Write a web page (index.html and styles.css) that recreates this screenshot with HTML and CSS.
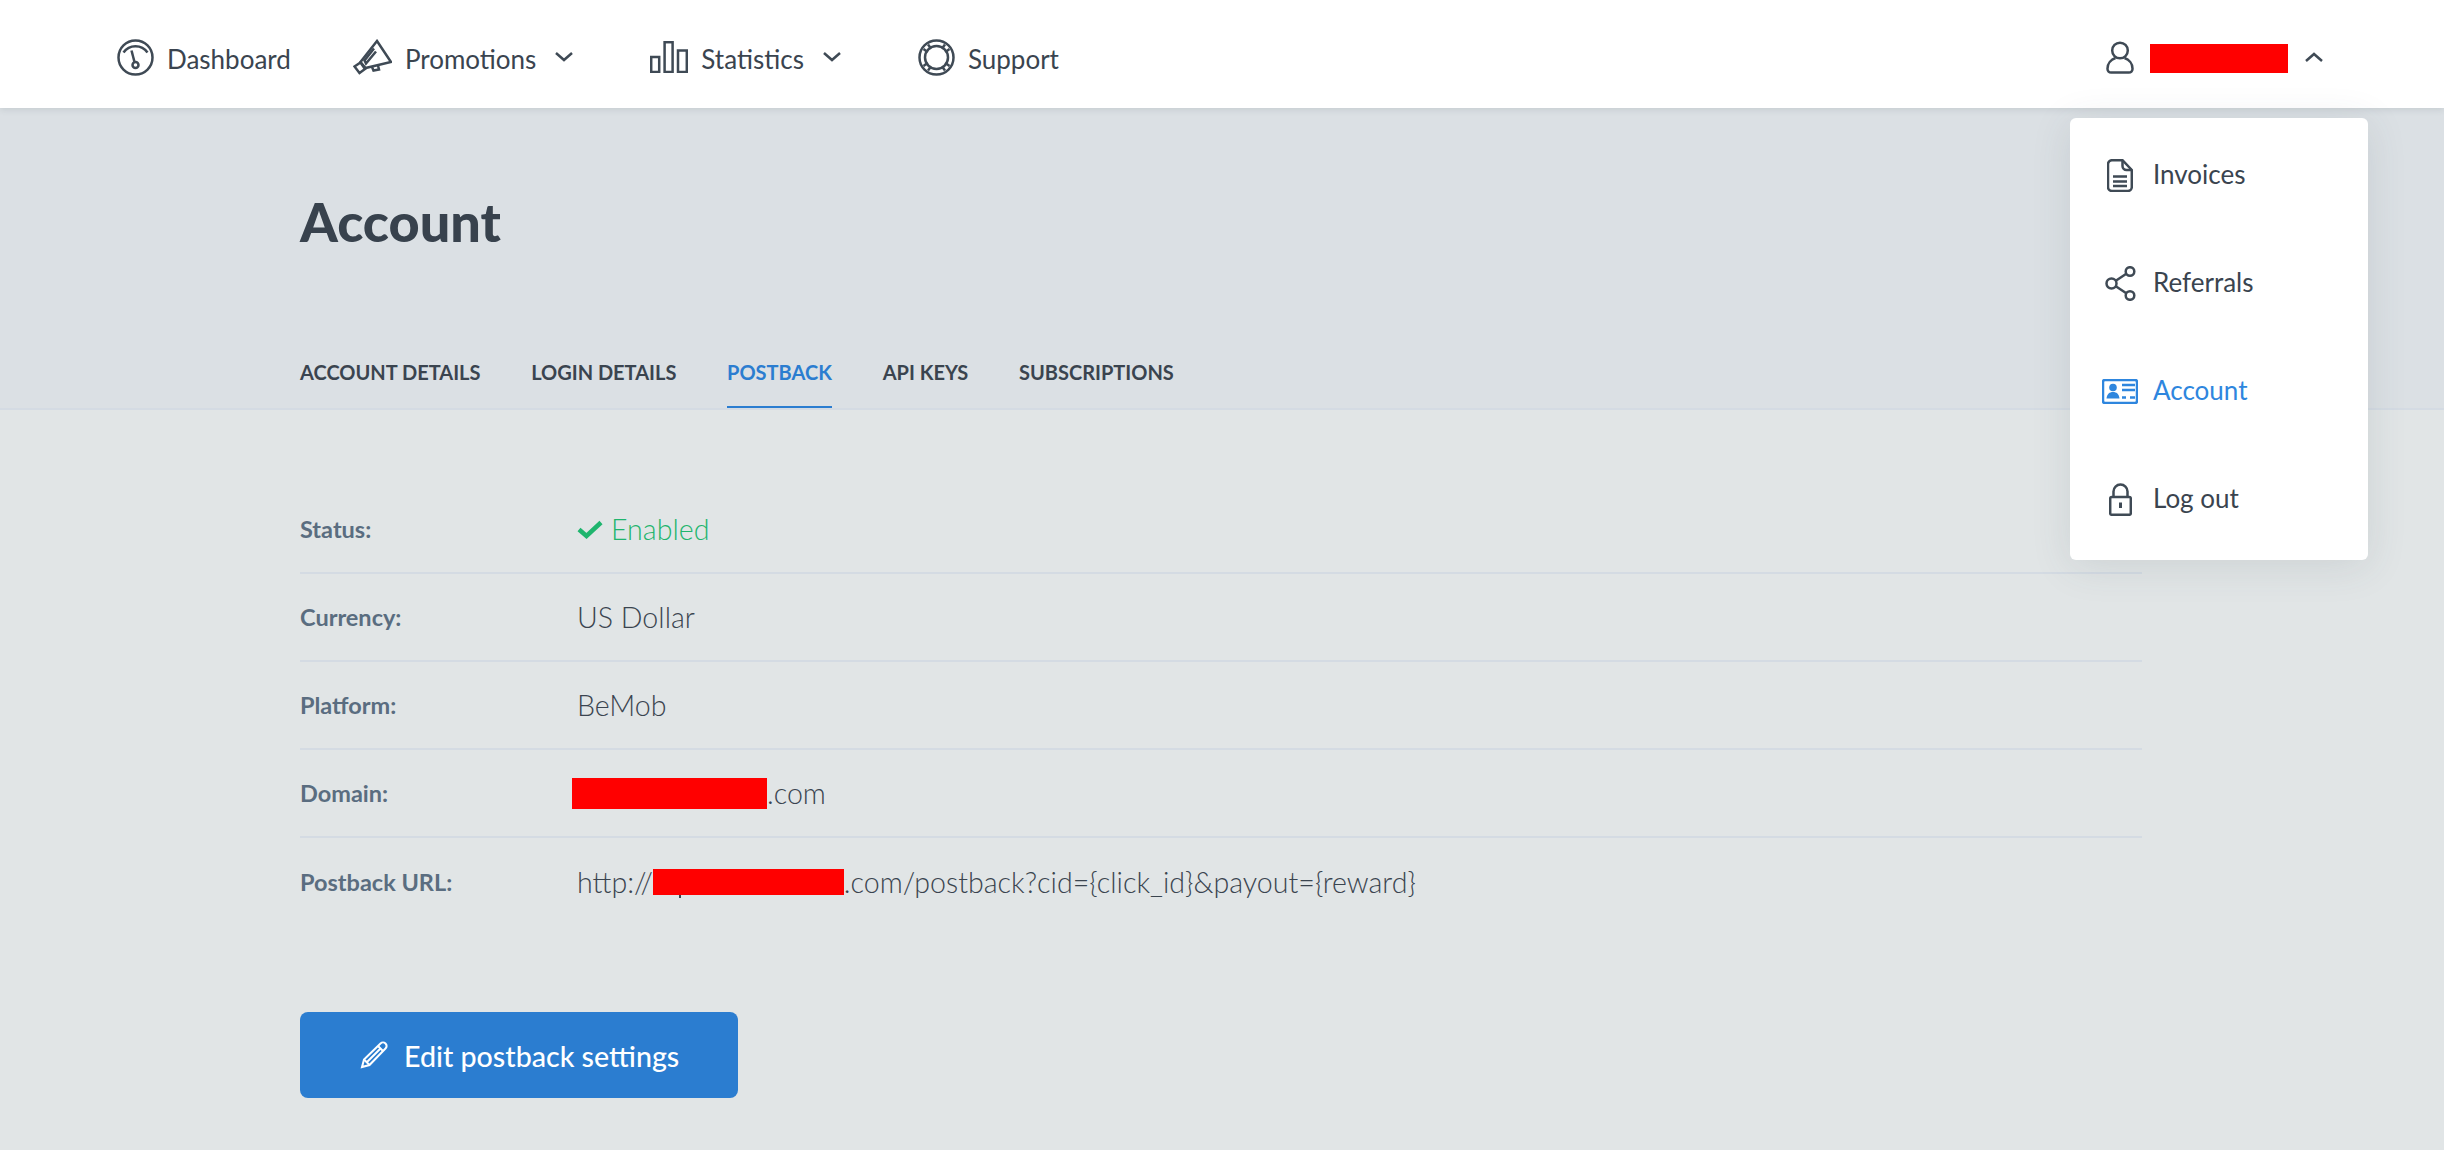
FILE: index.html
```html
<!DOCTYPE html>
<html lang="en">
<head>
    <meta charset="UTF-8">
    <meta name="viewport" content="width=device-width, initial-scale=1.0">
    <title>Account</title>
    <link rel="stylesheet" href="styles.css">
</head>
<body>

    <header class="topbar">
        <nav class="mainnav">
            <a class="navlink">
                <svg class="ico" width="37" height="37" viewBox="0 0 37 37"><circle cx="18.5" cy="18.5" r="17"/><path d="M6.5 13.5A14.5 14.5 0 0 1 30.5 13.5"/><path d="M14.5 11.5L17.5 23"/><circle cx="18.5" cy="26" r="3"/></svg>
                <span>Dashboard</span>
            </a>
            <a class="navlink">
                <svg class="ico" width="39" height="36" viewBox="0 0 39 36"><path d="M24 2L38 23L12.5 29L7.5 23Z"/><path d="M21 9.5L11.5 21.5L13 24.5L23 12.5"/><path d="M1.5 27.5L7.500 23.500L12 30L6.500 34Z"/><path d="M19 28L20.500 31.500L26 30.500L25 26.500"/></svg>
                <span>Promotions</span>
                <svg class="chev" width="18" height="10" viewBox="0 0 18 10"><path d="M1 1L9 8L17 1"/></svg>
            </a>
            <a class="navlink">
                <svg class="ico" width="38" height="32" viewBox="0 0 38 32"><rect x="1.2" y="16" width="8" height="15"/><rect x="14.6" y="1.2" width="8" height="29.8"/><rect x="28" y="9.5" width="8.8" height="21.5"/></svg>
                <span>Statistics</span>
                <svg class="chev" width="18" height="10" viewBox="0 0 18 10"><path d="M1 1L9 8L17 1"/></svg>
            </a>
            <a class="navlink">
                <svg class="ico" width="37" height="37" viewBox="0 0 37 37"><circle cx="18.5" cy="18.5" r="17"/><circle cx="18.5" cy="18.5" r="11.500"/><path d="M5.500 10L9.500 13M10 5.500L13 9.500M27 5.500L24 9.500M31.500 10L27.500 13M5.500 27L9.500 24M10 31.500L13 27.500M27 31.500L24 27.500M31.500 27L27.500 24"/></svg>
                <span>Support</span>
            </a>
        </nav>
        <div class="usermenu">
            <svg class="ico" width="28" height="33" viewBox="0 0 28 33"><circle cx="14" cy="9.5" r="7.8"/><path d="M9.5 17C5 18.5 1.5 22.5 1.5 27.5v.5A3.6 3.6 0 0 0 5.1 31.6H22.900A3.6 3.6 0 0 0 26.500 28v-.5C26.500 22.500 23 18.500 18.500 17"/></svg>
            <span class="mask usermask"></span>
            <svg class="chev" width="18" height="10" viewBox="0 0 18 10"><path d="M1 9L9 2L17 9"/></svg>
        </div>
    </header>

    <div class="dropdown">
        <a class="dropitem">
            <span class="dropicon"><svg class="ico" width="26" height="33" viewBox="0 0 26 33"><path d="M5 1.200H15.500L24.800 11V28a4 4 0 0 1-4 4H5a4 4 0 0 1-4-4V5.200a4 4 0 0 1 4-4Z"/><path d="M15.500 1.200V7a4 4 0 0 0 4 4H24.800"/><path d="M6 17.500H20M6 22.500H20M6 27H20"/></svg></span>
            <span class="droptext">Invoices</span>
        </a>
        <a class="dropitem">
            <span class="dropicon"><svg class="ico" width="31" height="35" viewBox="0 0 31 35"><circle cx="6.500" cy="17.500" r="5"/><circle cx="25" cy="5.500" r="4.300"/><circle cx="25" cy="29.500" r="4.300"/><path d="M10.800 14.700L21.300 7.800M10.800 20.300L21.300 27.200"/></svg></span>
            <span class="droptext">Referrals</span>
        </a>
        <a class="dropitem active">
            <span class="dropicon"><svg class="ico" width="36" height="25" viewBox="0 0 36 25"><rect x="1" y="1" width="34" height="23" rx="2"/><circle class="fillpart" cx="11" cy="8.500" r="3.800"/><path class="fillpart" d="M4.500 19.500C5 15 7.500 13 11 13S17 15 17.500 19.500Z"/><path d="M20 6H33M20 11H33M20 18.500H24M28 18.500H33"/></svg></span>
            <span class="droptext">Account</span>
        </a>
        <a class="dropitem">
            <span class="dropicon"><svg class="ico" width="23" height="33" viewBox="0 0 23 33"><rect x="1.200" y="14" width="20.600" height="17.800" rx="1.500"/><path d="M4.500 14V8.500a7 7 0 0 1 14 0V14"/><path class="keyhole" d="M11.500 19.500V25"/></svg></span>
            <span class="droptext">Log out</span>
        </a>
    </div>

    <section class="hero">
        <h1>Account</h1>
        <div class="tabs">
            <a class="tab">Account details</a>
            <a class="tab">Login details</a>
            <a class="tab current">Postback</a>
            <a class="tab">API keys</a>
            <a class="tab">Subscriptions</a>
        </div>
    </section>

    <main class="content">
        <div class="row">
            <div class="label">Status:</div>
            <div class="value enabled">
                <svg class="check" width="26" height="19" viewBox="0 0 26 19"><path d="M2 9.500L9.500 16L24 2.500"/></svg>
                Enabled
            </div>
        </div>
        <div class="row">
            <div class="label">Currency:</div>
            <div class="value">US Dollar</div>
        </div>
        <div class="row">
            <div class="label">Platform:</div>
            <div class="value">BeMob</div>
        </div>
        <div class="row">
            <div class="label">Domain:</div>
            <div class="value"><span class="mask domainmask"></span>.com</div>
        </div>
        <div class="row last">
            <div class="label">Postback URL:</div>
            <div class="value">http://<span class="mask urlmask"></span>.com/postback?cid={click_id}&amp;payout={reward}</div>
        </div>

        <button class="editbtn" type="button">
            <svg width="28" height="28" viewBox="0 0 28 28"><path d="M2 26L4 18.500L20.500 2.500C22 1 24 1 25.500 2.500S27 6 25.500 7.500L9.500 24Z"/><path d="M4 18.500L9.500 24M18 5L23 10M7 21L21 7"/></svg>
            <span class="btntext">Edit postback settings</span>
        </button>
    </main>

</body>
</html>
```

FILE: styles.css
```css
body{
    margin: 0;
    min-height: 100vh;
    font-family: Lato, "Open Sans", sans-serif;
    color: #3a444f;
    background-color: #e1e5e6;
    overflow: hidden;
}
.topbar{
    box-sizing: border-box;
    position: relative;
    z-index: 2;
    display: flex;
    align-items: center;
    justify-content: space-between;
    height: 108px;
    padding: 6px 121px 0 117px;
    background: #fff;
    box-shadow: 0 2px 6px rgba(60,70,80,0.12);
}
.mainnav{
    display: flex;
    align-items: center;
    gap: 62px;
}
.navlink{
    display: flex;
    align-items: center;
    font-size: 26px;
}
.navlink span{
    padding-top: 3px;
}
.navlink .ico{
    margin-right: 13px;
}
.navlink .chev{
    margin: 0 15px 0 19px;
}
.ico{
    flex: none;
    fill: none;
    stroke: #3f4a55;
    stroke-width: 2.500;
}
.chev{
    flex: none;
    fill: none;
    stroke: #3f4a55;
    stroke-width: 2.500;
}
.usermenu{
    display: flex;
    align-items: center;
}
.mask{
    display: inline-block;
    background: #f00;
}
.usermask{
    width: 138px;
    height: 29px;
    margin: 3px 17px 0 16px;
}
.dropdown{
    position: absolute;
    z-index: 3;
    top: 118px;
    right: 76px;
    width: 298px;
    padding: 3px 0 7px;
    background: #fff;
    border-radius: 6px;
    box-shadow: 0 6px 40px rgba(60,70,80,0.12);
}
.dropitem{
    display: flex;
    align-items: center;
    height: 108px;
    font-size: 26px;
}
.droptext{
    padding-bottom: 2px;
}
.dropicon{
    display: flex;
    justify-content: center;
    width: 36px;
    margin: 0 15px 0 32px;
}
.dropitem.active{
    color: #2e86de;
}
.dropitem.active .ico{
    stroke: #2e86de;
}
.ico .fillpart{
    fill: #2e86de;
    stroke: none;
}
.ico .keyhole{
    stroke-width: 3;
}
.hero{
    box-sizing: border-box;
    display: flex;
    flex-direction: column;
    height: 302px;
    padding: 82px 0 0 300px;
    background-color: #dbe0e4;
    border-bottom: 2px solid #d4dbe3;
}
h1{
    margin: 0;
    font-size: 54px;
    line-height: 64px;
    font-weight: 900;
    color: #38424d;
}
.tabs{
    display: flex;
    gap: 50.700px;
    margin-top: auto;
}
.tab{
    padding-bottom: 22px;
    border-bottom: 2px solid transparent;
    font-size: 20px;
    line-height: 24px;
    font-weight: 700;
    text-transform: uppercase;
}
.tab.current{
    color: #2b7dd0;
    border-bottom-color: #2b7dd0;
}
.content{
    width: 1842px;
    margin-left: 300px;
    padding-top: 76px;
}
.row{
    box-sizing: border-box;
    display: flex;
    align-items: center;
    height: 88px;
    border-bottom: 2px solid #d4dbe3;
}
.row.last{
    border-bottom: none;
}
.label{
    width: 277px;
    font-size: 23.500px;
    font-weight: 700;
    color: #5a6d80;
}
.value{
    display: flex;
    align-items: center;
    font-size: 28.600px;
    font-weight: 300;
}
.enabled{
    color: #1fb56e;
}
.check{
    margin-right: 8px;
    fill: none;
    stroke: #1fb56e;
    stroke-width: 4.500;
}
.domainmask{
    width: 195px;
    height: 31px;
    margin-left: -5px;
}
.urlmask{
    position: relative;
    width: 191px;
    height: 26px;
}
/* tail of the letter sticking out under the red box */
.urlmask::after{
    content: "";
    position: absolute;
    top: 100%;
    left: 26px;
    width: 2px;
    height: 3px;
    background: #3a444f;
}
.editbtn{
    display: flex;
    align-items: center;
    gap: 16px;
    width: 438px;
    height: 86px;
    margin-top: 86px;
    padding: 0 0 0 60px;
    border: none;
    border-radius: 8px;
    background-color: #2b7dd0;
    font-family: inherit;
    font-size: 28.600px;
    font-weight: 500;
    color: #fff;
}
.btntext{
    padding-top: 2px;
}
.editbtn svg{
    fill: none;
    stroke: #fff;
    stroke-width: 2;
}
```
